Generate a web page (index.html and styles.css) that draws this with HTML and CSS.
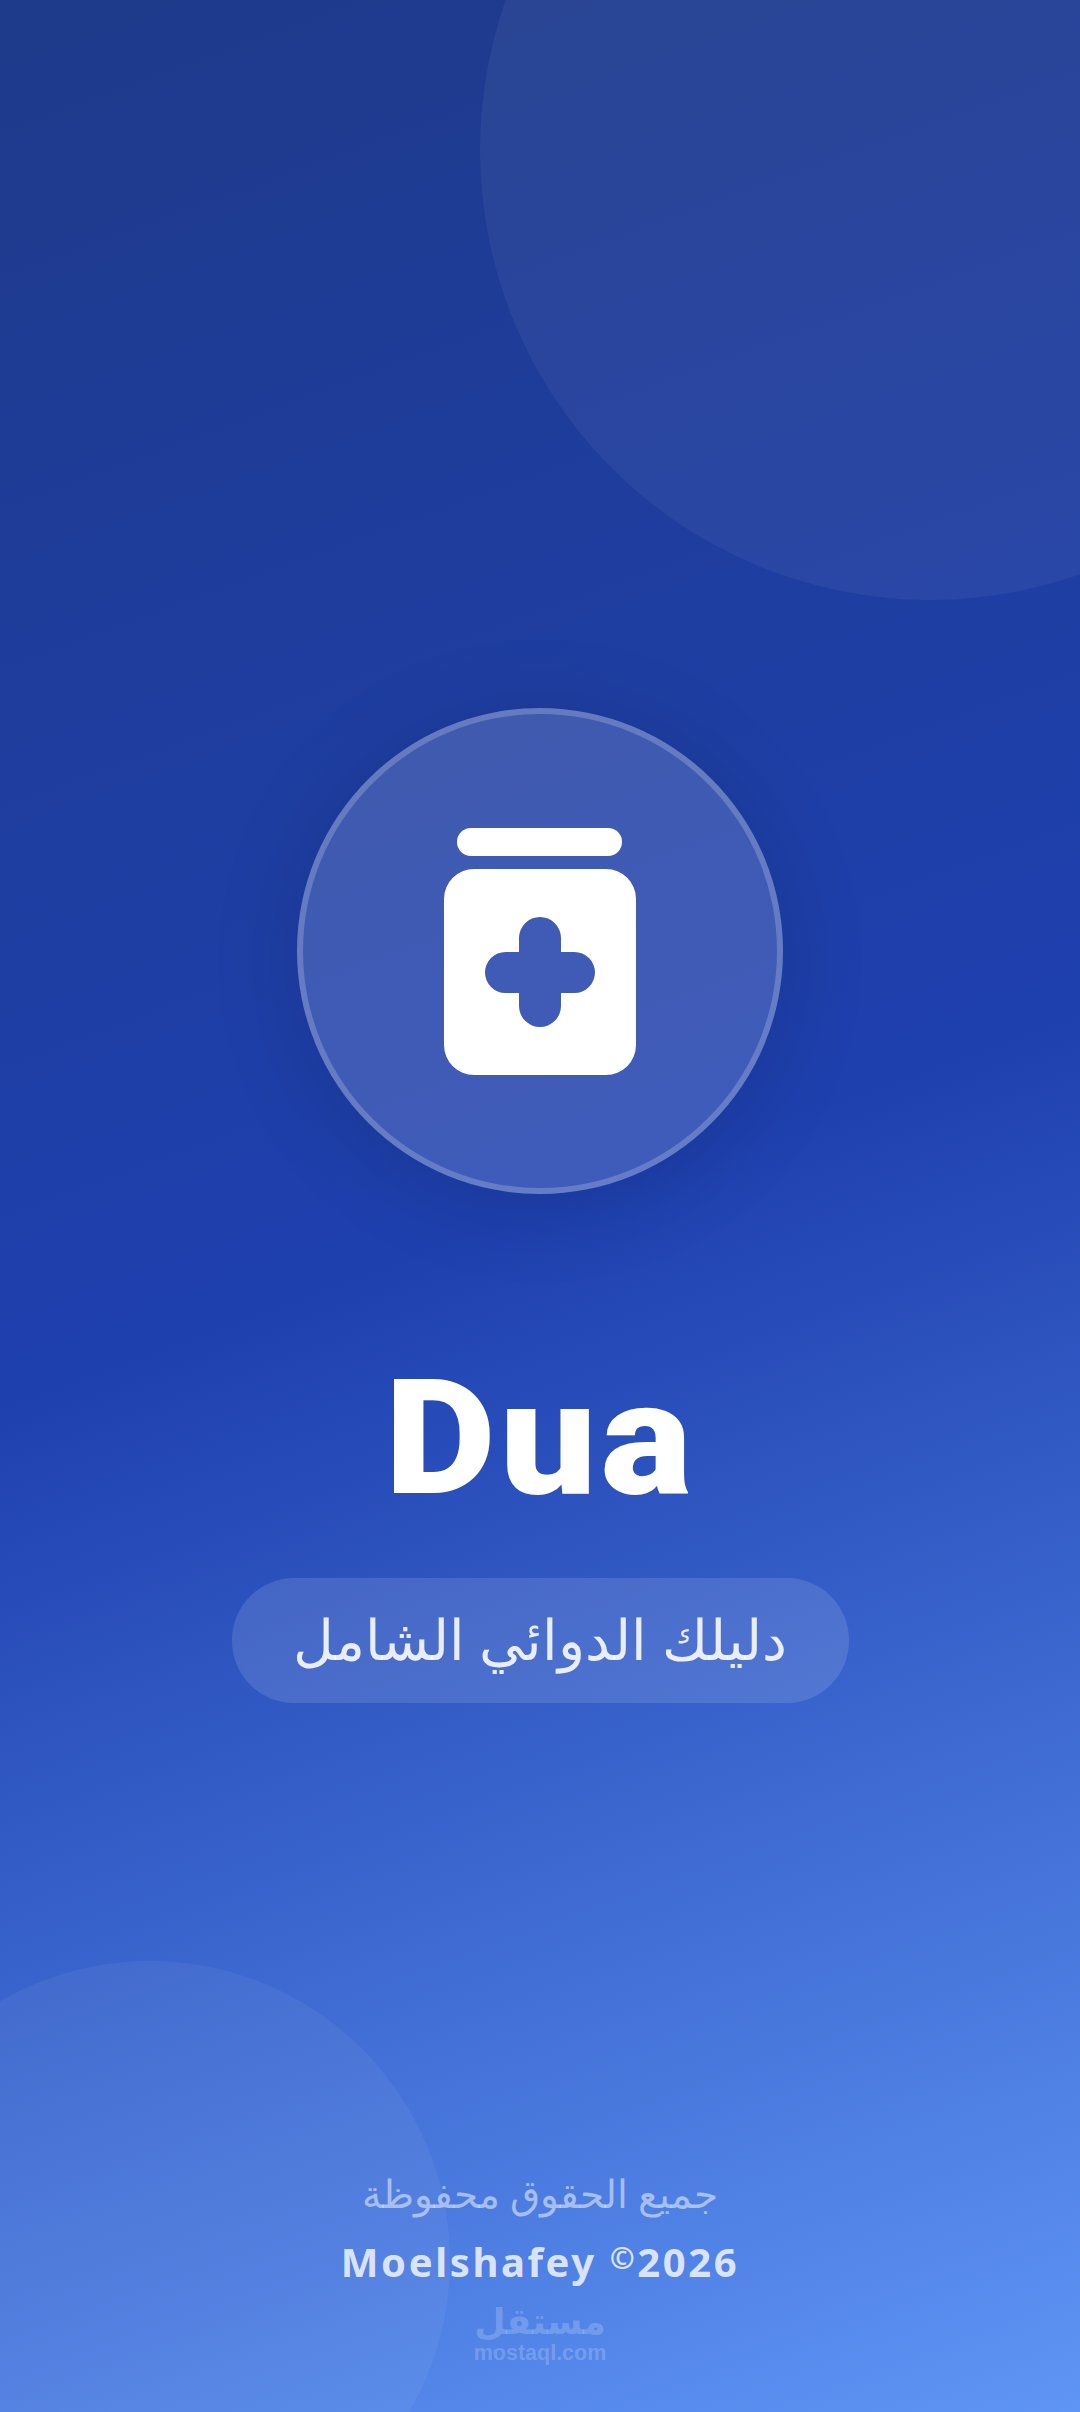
FILE: index.html
```html
<!DOCTYPE html>
<html lang="ar" dir="rtl">
<head>
    <meta charset="UTF-8">
    <meta name="viewport" content="width=device-width, initial-scale=1.0">
    <title>Dua</title>
    <link rel="stylesheet" href="styles.css">
</head>
<body>
    <div class="screen">
        <div class="blob blob-top"></div>
        <div class="blob blob-bottom"></div>

        <div class="logo-circle">
            <svg class="jar-icon" viewBox="0 0 192 247" width="192" height="247">
                <rect x="13" y="0" width="165" height="28" rx="14" fill="#fff"/>
                <path fill="#fff" fill-rule="evenodd" d="M30 41H162a30 30 0 0 1 30 30V217a30 30 0 0 1 -30 30H30a30 30 0 0 1 -30 -30V71a30 30 0 0 1 30 -30Z
                    M75 110a21 21 0 0 1 42 0V124H130.5a20.5 20.5 0 0 1 0 41H117V178a21 21 0 0 1 -42 0V165H61.5a20.5 20.5 0 0 1 0 -41H75Z"/>
            </svg>
        </div>

        <h1 class="app-name" dir="ltr">Dua</h1>
        <p class="tagline">دليلك الدوائي الشامل</p>

        <footer class="footer">
            <p class="rights">جميع الحقوق محفوظة</p>
            <p class="owner" dir="ltr">Moelshafey <span class="copy">©</span>2026</p>
            <div class="watermark">
                <span class="watermark-ar">مستقل</span>
                <span class="watermark-en" dir="ltr">mostaql.com</span>
            </div>
        </footer>
    </div>
</body>
</html>
```

FILE: styles.css
```css
* {
    margin: 0;
    padding: 0;
    box-sizing: border-box;
}

body {
    width: 1080px;
    height: 2412px;
    overflow: hidden;
    font-family: 'Noto Sans', 'DejaVu Sans', sans-serif;
}

.screen {
    position: relative;
    width: 1080px;
    height: 2412px;
    overflow: hidden;
    display: flex;
    flex-direction: column;
    align-items: center;
    padding-top: 708px;
    background: linear-gradient(160deg, #1e3a8a 0%, #1e40af 50%, #5f95f5 100%);
}

.blob {
    position: absolute;
    border-radius: 50%;
    background: rgba(255, 255, 255, 0.05);
}

.blob-top {
    width: 900px;
    height: 900px;
    top: -300px;
    left: 480px;
}

.blob-bottom {
    width: 600px;
    height: 600px;
    top: 1961px;
    left: -150px;
}

.logo-circle {
    width: 486px;
    height: 486px;
    flex-shrink: 0;
    border-radius: 50%;
    border: 6px solid rgba(255, 255, 255, 0.2);
    background: rgba(255, 255, 255, 0.15);
    box-shadow: 0 10px 90px rgba(0, 0, 0, 0.14);
    display: flex;
    align-items: center;
    justify-content: center;
}

.jar-icon {
    display: block;
}

.app-name {
    margin-top: 145px;
    font-family: Roboto, 'Noto Sans', sans-serif;
    font-size: 160px;
    font-weight: 900;
    line-height: 200px;
    letter-spacing: 4px;
    color: #fff;
    transform: scaleX(1.07);
}

.tagline {
    margin-top: 39px;
    width: 617px;
    height: 125px;
    padding-bottom: 6px;
    border-radius: 62px;
    background: rgba(255, 255, 255, 0.12);
    display: flex;
    align-items: center;
    justify-content: center;
    font-size: 56px;
    font-weight: 300;
    color: rgba(255, 255, 255, 0.88);
}

.footer {
    margin-top: auto;
    margin-bottom: 47px;
    display: flex;
    flex-direction: column;
    align-items: center;
}

.rights {
    font-size: 39px;
    line-height: 50px;
    font-weight: 300;
    color: rgba(255, 255, 255, 0.5);
}

.owner {
    margin-top: 15px;
    font-size: 40px;
    line-height: 50px;
    font-weight: 700;
    letter-spacing: 2.6px;
    color: rgba(255, 255, 255, 0.8);
}

.copy {
    font-size: 30px;
    vertical-align: 8px;
}

.watermark {
    margin-top: 14px;
    display: flex;
    flex-direction: column;
    align-items: center;
    color: rgba(255, 255, 255, 0.2);
    font-weight: 700;
}

.watermark-ar {
    font-size: 36px;
    line-height: 40px;
}

.watermark-en {
    font-family: 'Liberation Sans', Arial, sans-serif;
    font-size: 21.5px;
    line-height: 24px;
}
```
